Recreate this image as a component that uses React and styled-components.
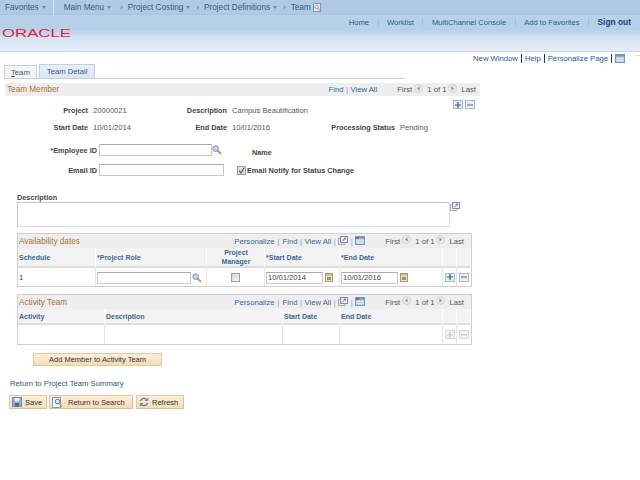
import React from "react";
import styled, { createGlobalStyle } from "styled-components";

const Global = createGlobalStyle`
  html, body { margin: 0; padding: 0; background: #fff; }
  body { font-family: "Liberation Sans", Arial, sans-serif; font-size: 7.7px; color: #444; }
  * { box-sizing: border-box; }
`;

const Page = styled.div`
  width: 640px;
  height: 480px;
  overflow: hidden;
  display: flex;
  flex-direction: column;
`;

const Icon = styled.svg`
  display: block;
  flex: none;
  margin-top: ${(p) => p.$mt || 0}px;
  margin-left: ${(p) => p.$ml || 0}px;
`;

/* header */
const Header = styled.header`
  height: 52px;
  border-bottom: 1px solid #cfd6e2;
  background: linear-gradient(#a9c6e3 0, #b9d1ea 15px, #b7d0ea 30px, #d6e3f3 38px, #e4ecf7 50px);
  display: flex;
  flex-direction: column;
`;
const MenuBar = styled.nav`
  height: 15px;
  display: flex;
  align-items: center;
  padding-left: 5px;
  color: #3f5a78;
  font-size: 8.2px;
  background: #b0cae5;
  border-bottom: 1px solid #a6c3e0;
`;
const MenuItem = styled.span`
  display: flex;
  align-items: center;
  margin-right: ${(p) => p.$gap ?? 6}px;
  white-space: nowrap;
`;
const Caret = styled.i`
  display: inline-block;
  width: 0;
  height: 0;
  margin-left: 3px;
  border: 2.5px solid transparent;
  border-top: 3px solid #6f8cab;
  border-bottom: 0;
`;
const Arrow = styled.span`
  margin-right: 5px;
  color: #5a7594;
  font-size: 8px;
`;
const MenuDivider = styled.i`
  width: 1px;
  height: 15px;
  background: #d3e2f2;
  margin: 0 10px 0 3px;
`;
const HeaderBody = styled.div`
  flex: 1;
  display: flex;
  justify-content: space-between;
  align-items: flex-start;
`;
const Logo = styled.svg`
  margin: 12px 0 0 2px;
  display: block;
`;
const TopLinks = styled.div`
  display: flex;
  align-items: center;
  margin-top: 3px;
  padding-right: 9px;
  height: 9px;
  font-size: 7.6px;
  color: #2d5c8e;
`;
const TopLink = styled.span`
  padding: 0 8.5px;
  border-right: 1px solid #a9bfd8;
  line-height: 9px;
  &:last-child {
    border: 0;
    padding-right: 0;
    font-weight: bold;
    font-size: 8.4px;
    color: #1d3f73;
  }
`;

const PageLinks = styled.div`
  height: 11px;
  margin-top: 1px;
  display: flex;
  justify-content: flex-end;
  align-items: center;
  color: #2d5c8e;
  gap: 3px;
`;
const Bar = styled.i`
  width: 1px;
  height: 9px;
  background: #1d3f73;
`;
const Tick = styled.i`
  width: 5px;
  height: 1px;
  margin-left: 7px;
  align-self: flex-start;
  margin-top: 2px;
  background: #dcdcdc;
`;

/* tabs */
const Tabs = styled.div`
  margin-left: 4px;
  width: 401px;
  height: 15px;
  display: flex;
  align-items: flex-end;
  border-bottom: 1px solid #c4d0e0;
  gap: 2px;
`;
const Tab = styled.span`
  height: ${(p) => (p.$active ? 14 : 13)}px;
  padding: 0 ${(p) => (p.$active ? 7 : 6)}px;
  border: 1px solid #c4d0e0;
  border-bottom: 0;
  line-height: 13px;
  color: ${(p) => (p.$active ? "#3d5a80" : "#456")};
  background: ${(p) => (p.$active ? "linear-gradient(#e9eff7, #d9e4f1)" : "#f3f6f9")};
`;

/* section band */
const Band = styled.div`
  margin: 4px 0 0 5px;
  width: 475px;
  height: 13px;
  padding: 0 4px 0 2px;
  background: #eeeeee;
  display: flex;
  align-items: center;
`;
const Title = styled.span`
  color: #ab7236;
  font-size: 8.2px;
  flex: 1;
`;
const Nav = styled.span`
  display: flex;
  align-items: center;
  gap: 2px;
  color: #556;
  white-space: nowrap;
`;
const Link = styled.span`
  color: #336a9d;
`;
const Sep = styled.span`
  color: ${(p) => p.$c || "#7f9ab5"};
  margin: 0 ${(p) => p.$m ?? 0.5}px;
`;
const Spacer = styled.span`
  flex: none;
  width: ${(p) => p.$w}px;
`;

const PlusMinus = styled.div`
  display: flex;
  justify-content: flex-end;
  gap: 2px;
  width: 475px;
  margin-top: 4px;
  height: 9px;
`;

const Sq = styled.span`
  width: 10px;
  height: 9px;
  border: 1px solid ${(p) => (p.$off ? "#d5d8dc" : "#a9b9cc")};
  background: ${(p) => (p.$off ? "#f2f3f4" : "#e9eef5")};
  display: flex;
  align-items: center;
  justify-content: center;
`;

/* field rows */
const Info = styled.div`
  display: grid;
  grid-template-columns: 88px 73px 56px 91px 67px 1fr;
  grid-auto-rows: 17px;
  align-items: center;
  margin-top: -7px;
  column-gap: 5px;
`;
const Label = styled.b`
  text-align: right;
  color: #444;
  font-size: 7.3px;
  white-space: nowrap;
`;
const Value = styled.span`
  color: #555;
  font-size: 7.6px;
  white-space: nowrap;
`;

const FormRow = styled.div`
  display: flex;
  align-items: center;
  height: 20px;
  margin-top: ${(p) => p.$mt || 0}px;
`;
const FormLabel = styled(Label)`
  width: 99px;
  padding-right: 2px;
`;
const Input = styled.span`
  display: block;
  flex: none;
  width: ${(p) => p.$w}px;
  height: 12px;
  border: 1px solid #c9c9c9;
  border-top-color: #aaa;
  background: #fff;
  padding-left: 1px;
  font-size: 7.6px;
  line-height: 10px;
  color: #444;
`;
const Name = styled(Label)`
  margin: 5px 0 0 30px;
`;
const Check = styled.span`
  width: 9px;
  height: 9px;
  flex: none;
  border: 1px solid #9aa0a6;
  background: ${(p) => (p.$on ? "#d7dfe8" : "linear-gradient(135deg, #d8d8d8, #f3f3f3)")};
  display: flex;
  align-items: center;
  justify-content: center;
`;
const CheckLabel = styled(Label)`
  margin-left: 1px;
`;

const DescLabel = styled(Label)`
  display: block;
  text-align: left;
  margin: 13px 0 0 17px;
  line-height: 9px;
`;
const DescRow = styled.div`
  margin-left: 17px;
  display: flex;
  align-items: flex-start;
`;
const TextArea = styled.div`
  width: 433px;
  height: 25px;
  border: 1px solid #dbe1ea;
  border-top: 1px solid #c6c6c6;
  border-left: 1px solid #c6c6c6;
`;

/* grids */
const GridBox = styled.section`
  margin: ${(p) => p.$mt}px 0 0 17px;
  width: 455px;
  border: 1px solid #cfcfcf;
`;
const GridTitle = styled.div`
  height: 14px;
  padding: 0 7px 0 1px;
  display: flex;
  align-items: center;
  background: #eeeeee;
`;
const Rows = styled.div`
  display: grid;
  grid-template-columns: ${(p) => p.$cols};
  grid-template-rows: ${(p) => p.$rows};
`;
const Head = styled.div`
  background: #f3f3f3;
  border-right: 1px solid #fff;
  border-bottom: 2px solid #dedede;
  color: #3b6897;
  font-weight: bold;
  padding-left: 1px;
  display: flex;
  align-items: center;
  justify-content: ${(p) => (p.$center ? "center" : "flex-start")};
  text-align: ${(p) => (p.$center ? "center" : "left")};
  line-height: 9px;
  font-size: 7px;
`;
const Cell = styled.div`
  border-right: 1px solid #e6e6e6;
  display: flex;
  align-items: center;
  justify-content: ${(p) => (p.$center ? "center" : "flex-start")};
  padding: ${(p) => (p.$center ? "0" : "1px 0 0 1px")};
  gap: 1px;
  color: #444;
  &:last-child { border-right: 0; }
`;

/* buttons */
const AddButton = styled.div`
  margin: 8px 0 0 33px;
  width: 129px;
  height: 13px;
  border: 1px solid #e3c99f;
  background: linear-gradient(#fdeed8, #f6dcb5);
  text-align: center;
  line-height: 11px;
  font-size: 7.5px;
  color: #333;
`;
const ReturnLink = styled.div`
  margin: 13px 0 0 10px;
  line-height: 10px;
  color: #25598f;
`;
const Buttons = styled.div`
  margin: 6px 0 0 9px;
  display: flex;
  gap: 2px;
`;
const Btn = styled.div`
  width: ${(p) => p.$w}px;
  height: 14px;
  padding-left: 2px;
  margin-right: ${(p) => p.$mr || 0}px;
  gap: ${(p) => p.$gap}px;
  border: 1px solid #e3c99f;
  border-bottom-color: #dcbf92;
  border-right-color: #dcbf92;
  background: linear-gradient(#fdeed8, #f6dcb5);
  display: flex;
  align-items: center;
  font-size: 7.5px;
  white-space: nowrap;
  color: #333;
`;

const Search = () => (
  <Icon width="10" height="10" viewBox="0 0 10 10">
    <path d="M5.5 5.5 L9 8.8" stroke="#b9973f" strokeWidth="1.8" />
    <circle cx="3.6" cy="3.6" r="2.8" fill="#bcd8ee" stroke="#6b92b8" />
  </Icon>
);
const PageSearch = () => (
  <Icon width="8" height="9" viewBox="0 0 8 9">
    <rect x=".5" y=".5" width="7" height="8" fill="#e6eef7" stroke="#7f97b3" />
    <circle cx="3.6" cy="4" r="1.7" fill="#fff" stroke="#6f88a3" strokeWidth=".8" />
    <path d="M4.8 5.2 L7 7.6" stroke="#d2a83e" strokeWidth="1.3" />
  </Icon>
);
const Plus = ({ off }) => (
  <Sq $off={off}>
    <svg width="6" height="6" viewBox="0 0 6 6">
      <path d="M0 3H6M3 0V6" stroke={off ? "#c4c7ca" : "#2b5c92"} strokeWidth="1.2" />
    </svg>
  </Sq>
);
const Minus = ({ off }) => (
  <Sq $off={off}>
    <svg width="6" height="6" viewBox="0 0 6 6">
      <path d="M0 3H6" stroke={off ? "#c4c7ca" : "#5d7ea3"} strokeWidth="1.2" />
    </svg>
  </Sq>
);
const Round = ({ dir }) => (
  <Icon width="9" height="9" viewBox="0 0 9 9" $mt={-3}>
    <circle cx="4.5" cy="4.5" r="4" fill="#e8e8e8" stroke="#d4d4d4" />
    <path d={dir === "l" ? "M5.5 2.5 L3.2 4.5 L5.5 6.5Z" : "M3.5 2.5 L5.8 4.5 L3.5 6.5Z"} fill="#888" />
  </Icon>
);
const Zoom = ({ mt = -2 }) => (
  <Icon width="10" height="9" viewBox="0 0 10 9" $mt={mt}>
    <path d="M2.5 2.5H.5V8.5H7V6.5" fill="none" stroke="#9aa9ba" />
    <rect x="2.5" y="0.5" width="7" height="6" fill="#e8edf3" stroke="#7f8ea0" />
    <path d="M4.5 5 L7.5 2M5.8 2H7.5V3.7" stroke="#4d6a88" fill="none" strokeWidth=".8" />
  </Icon>
);
const Sheet = ({ red, mt = -2 }) => (
  <Icon width="10" height="9" viewBox="0 0 10 9" $mt={mt}>
    <rect x="0.5" y="0.5" width="9" height="8" fill="#b6cde4" stroke="#6f9ac8" />
    <rect x="1" y="1" width="8" height="1.6" fill="#6f9ac8" />
    {red && <rect x="1" y="1" width="3" height="2" fill="#d8465a" />}
    <path d="M1 4.5H9M1 6.5H9M3.5 3V8M6.5 3V8" stroke="#e4eef8" strokeWidth=".7" />
  </Icon>
);
const Calendar = () => (
  <Icon width="8" height="9" viewBox="0 0 8 9" $ml={1}>
    <rect x="0.5" y="0.5" width="7" height="8" fill="#efe4b9" stroke="#a89a6a" />
    <rect x="1" y="1" width="6" height="1.5" fill="#cdb97e" />
    <path d="M3 4V7M5 4V7" stroke="#444" />
  </Icon>
);

const Pager = () => (
  <Nav>
    First <Round dir="l" /> <Spacer $w={0} />1 of 1 <Round dir="r" /> <Spacer $w={0} />Last
  </Nav>
);
const GridNav = () => (
  <>
    <Nav>
      <Link>Personalize</Link>
      <Sep $c="#c58a6a" $m={1}>|</Sep>
      <Link>Find</Link>
      <Sep>|</Sep>
      <Link>View All</Link>
      <Sep $c="#c58a6a">|</Sep>
      <Zoom />
      <Sep>|</Sep>
      <Sheet red />
    </Nav>
    <Spacer $w={20} />
    <Pager />
  </>
);

export default function App() {
  return (
    <Page>
      <Global />
      <Header>
        <MenuBar>
          <MenuItem $gap={4}>Favorites<Caret /></MenuItem>
          <MenuDivider />
          <MenuItem $gap={9}>Main Menu<Caret /></MenuItem>
          <Arrow>›</Arrow>
          <MenuItem>Project Costing<Caret /></MenuItem>
          <Arrow>›</Arrow>
          <MenuItem>Project Definitions<Caret /></MenuItem>
          <Arrow>›</Arrow>
          <MenuItem $gap={2}>Team</MenuItem>
          <PageSearch />
        </MenuBar>
        <HeaderBody>
          <Logo width="72" height="12" viewBox="0 0 72 12">
            <text x="0" y="10" fontSize="11.7" fill="#ea1a34" fontFamily="Liberation Sans" textLength="69" lengthAdjust="spacingAndGlyphs">ORACLE</text>
          </Logo>
          <TopLinks>
            <TopLink>Home</TopLink>
            <TopLink>Worklist</TopLink>
            <TopLink>MultiChannel Console</TopLink>
            <TopLink>Add to Favorites</TopLink>
            <TopLink>Sign out</TopLink>
          </TopLinks>
        </HeaderBody>
      </Header>
      <PageLinks>
        New Window <Bar /> Help <Bar /> Personalize Page <Bar /> <Sheet mt={0} />
        <Tick />
      </PageLinks>
      <Tabs>
        <Tab><u>T</u>eam</Tab>
        <Tab $active>Team Detail</Tab>
      </Tabs>
      <Band>
        <Title>Team Member</Title>
        <Nav>
          <Link>Find</Link>
          <Sep>|</Sep>
          <Link>View All</Link>
        </Nav>
        <Spacer $w={20} />
        <Pager />
      </Band>
      <PlusMinus>
        <Plus />
        <Minus />
      </PlusMinus>
      <Info>
        <Label>Project</Label>
        <Value>20000021</Value>
        <Label>Description</Label>
        <Value>Campus Beautification</Value>
        <span />
        <span />
        <Label>Start Date</Label>
        <Value>10/01/2014</Value>
        <Label>End Date</Label>
        <Value>10/01/2016</Value>
        <Label>Processing Status</Label>
        <Value>Pending</Value>
      </Info>
      <FormRow $mt={4}>
        <FormLabel>*Employee ID</FormLabel>
        <Input $w={113} />
        <Search />
        <Name>Name</Name>
      </FormRow>
      <FormRow>
        <FormLabel>Email ID</FormLabel>
        <Input $w={125} />
        <Spacer $w={13} />
        <Check $on>
          <svg width="7" height="7" viewBox="0 0 7 7">
            <path d="M1 3.5 L3 6 L6 1" stroke="#45607f" strokeWidth="1.2" fill="none" />
          </svg>
        </Check>
        <CheckLabel>Email Notify for Status Change</CheckLabel>
      </FormRow>
      <DescLabel>Description</DescLabel>
      <DescRow>
        <TextArea />
        <Zoom mt={0} />
      </DescRow>
      <GridBox $mt={6}>
        <GridTitle>
          <Title>Availability dates</Title>
          <GridNav />
        </GridTitle>
        <Rows $cols="78px 111px 58px 75px 103px 14px 1fr" $rows="20px 18px">
          <Head>Schedule</Head>
          <Head>*Project Role</Head>
          <Head $center>Project<br />Manager</Head>
          <Head>*Start Date</Head>
          <Head>*End Date</Head>
          <Head />
          <Head />
          <Cell>1</Cell>
          <Cell>
            <Input $w={94} />
            <Search />
          </Cell>
          <Cell $center><Check /></Cell>
          <Cell><Input $w={57}>10/01/2014</Input><Calendar /></Cell>
          <Cell><Input $w={57}>10/01/2016</Input><Calendar /></Cell>
          <Cell $center><Plus /></Cell>
          <Cell $center><Minus /></Cell>
        </Rows>
      </GridBox>
      <GridBox $mt={7}>
        <GridTitle>
          <Title>Activity Team</Title>
          <GridNav />
        </GridTitle>
        <Rows $cols="87px 178px 57px 103px 14px 1fr" $rows="16px 19px">
          <Head>Activity</Head>
          <Head>Description</Head>
          <Head>Start Date</Head>
          <Head>End Date</Head>
          <Head />
          <Head />
          <Cell />
          <Cell />
          <Cell />
          <Cell />
          <Cell $center><Plus off /></Cell>
          <Cell $center><Minus off /></Cell>
        </Rows>
      </GridBox>
      <AddButton>Add Member to Activity Team</AddButton>
      <ReturnLink>Return to Project Team Summary</ReturnLink>
      <Buttons>
        <Btn $w={38} $gap={3}>
          <svg width="10" height="10" viewBox="0 0 10 10">
            <rect x=".5" y=".5" width="9" height="9" fill="#86abd8" stroke="#6c8fc0" />
            <rect x="2.5" y="1" width="5" height="3.5" fill="#eef3f9" />
            <rect x="3" y="6" width="4" height="3.5" fill="#3f6aa5" />
          </svg>
          Save
        </Btn>
        <Btn $w={84} $gap={5} $mr={1}>
          <svg width="11" height="11" viewBox="0 0 11 11">
            <rect x=".5" y=".5" width="8" height="10" fill="#f3f7fb" stroke="#7c9cc0" />
            <circle cx="5.5" cy="4.5" r="2.3" fill="#dbe9f5" stroke="#557da6" />
            <path d="M7 6.5 L10 9.5" stroke="#c9a540" strokeWidth="1.5" />
          </svg>
          Return to Search
        </Btn>
        <Btn $w={48} $gap={3}>
          <svg width="10" height="10" viewBox="0 0 10 10" fill="none">
            <path d="M1.5 4 A3.6 3.6 0 0 1 8 3M8.5 6 A3.6 3.6 0 0 1 2 7" stroke="#4f76a8" strokeWidth="1.2" />
            <path d="M8.8 .8V3.5H6.2M1.2 9.2V6.5H3.8" stroke="#4f76a8" strokeWidth=".9" />
          </svg>
          Refresh
        </Btn>
      </Buttons>
    </Page>
  );
}
